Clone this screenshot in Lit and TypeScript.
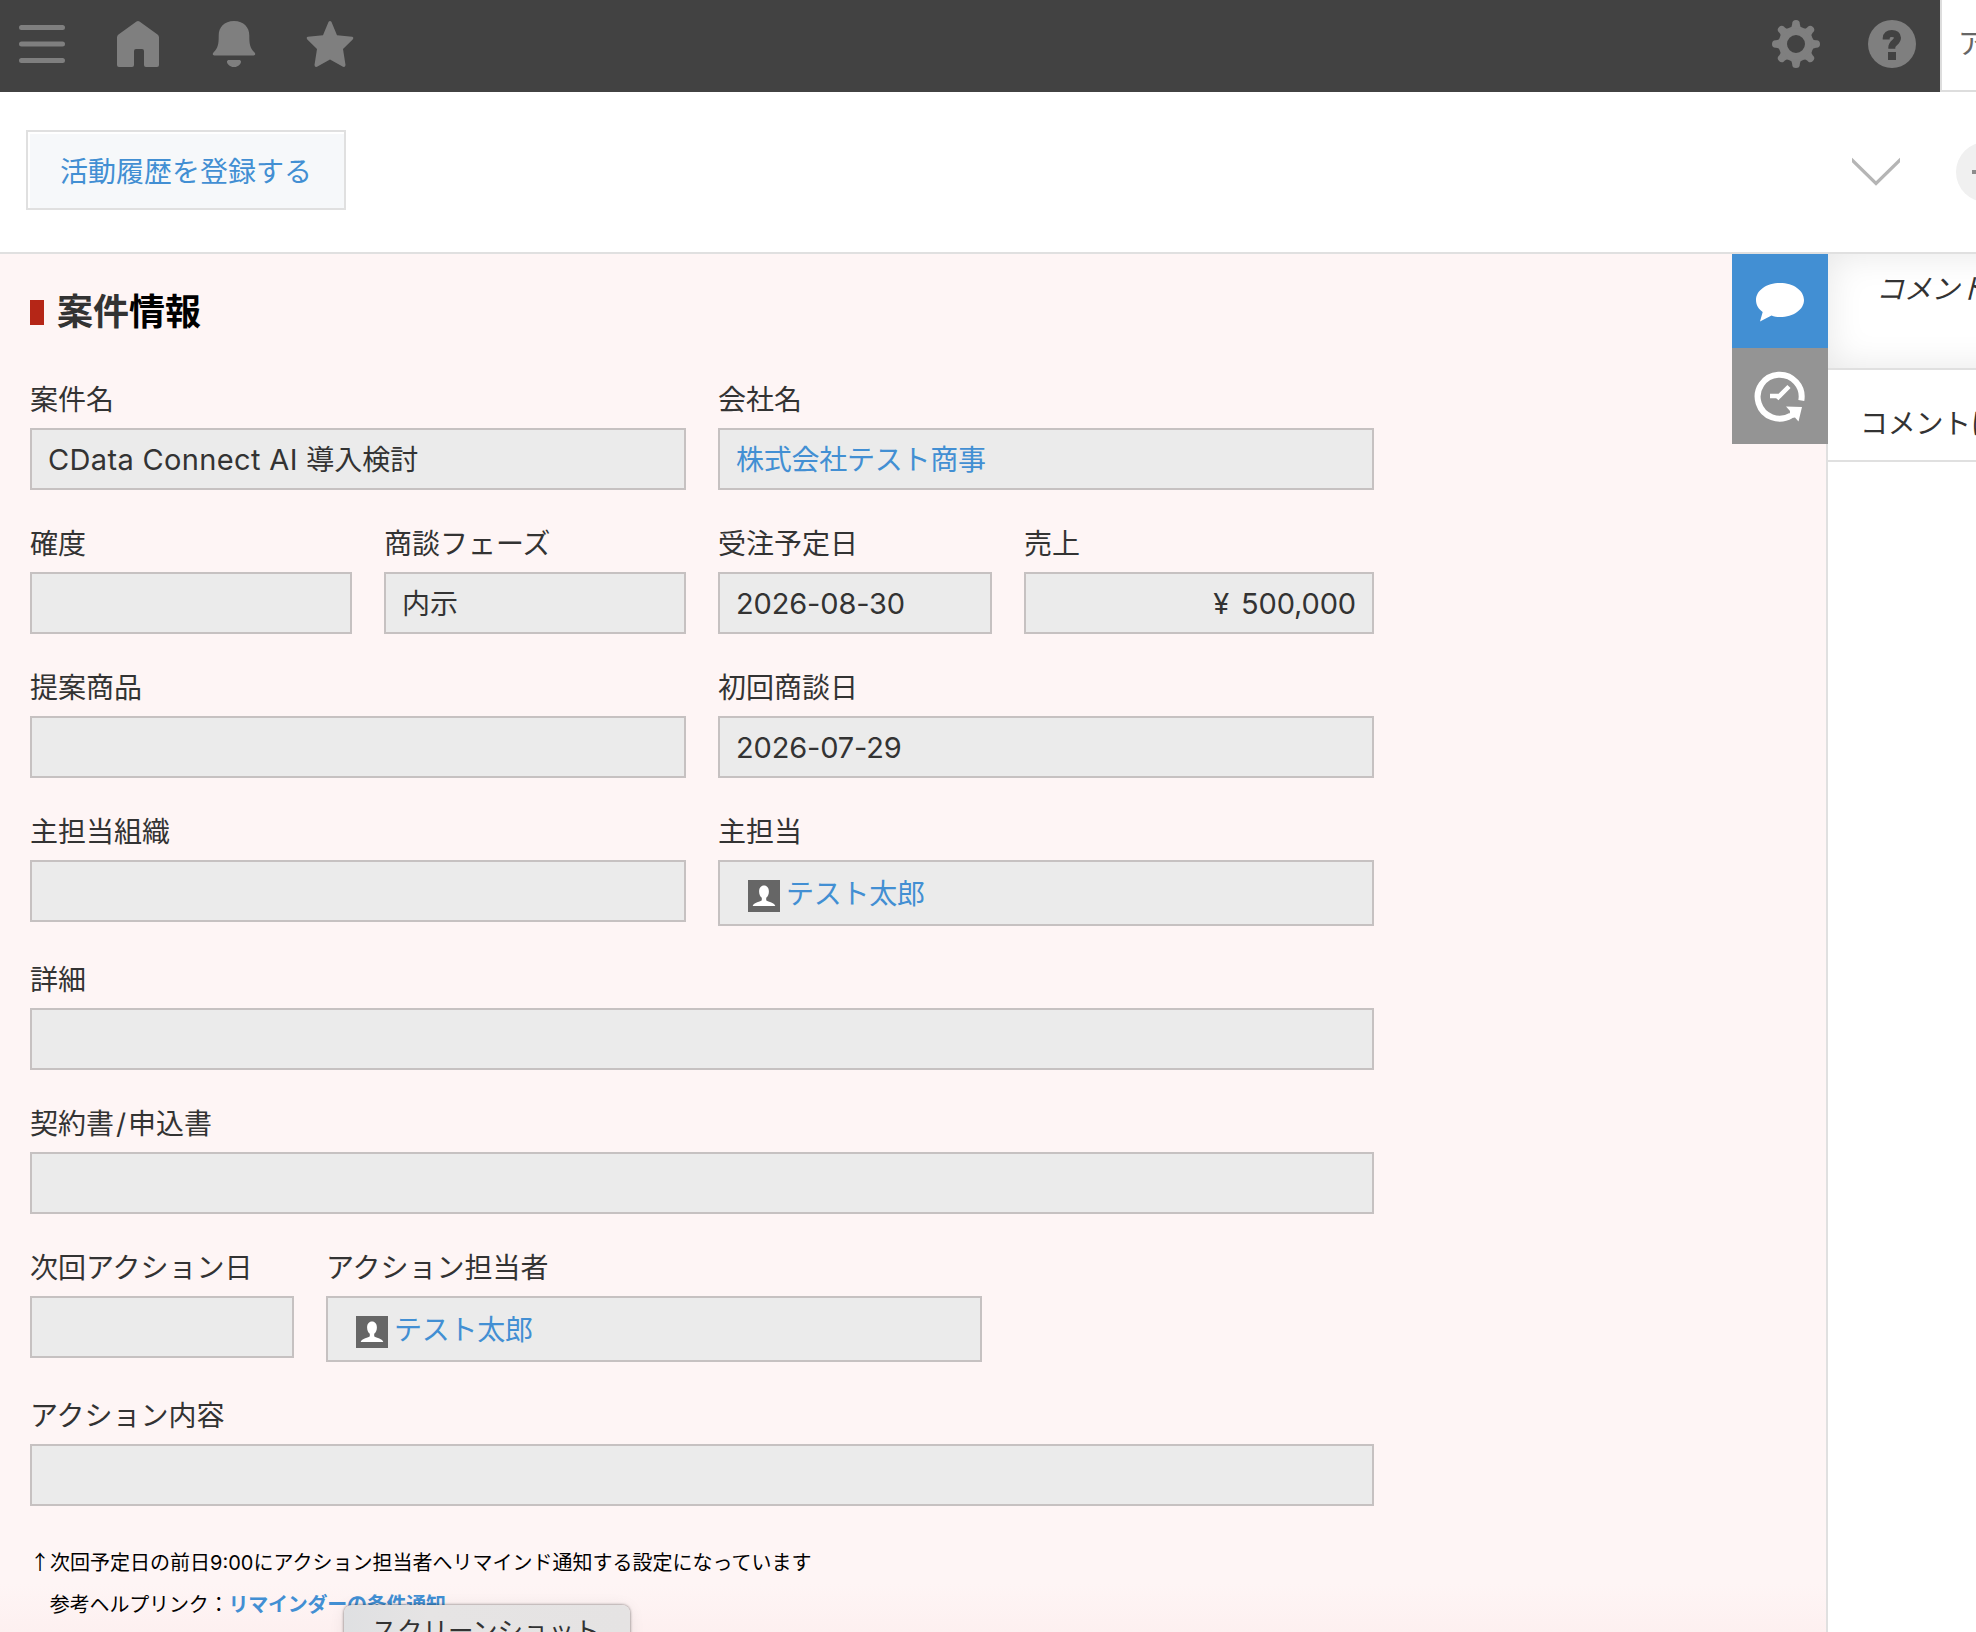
import { LitElement, html, css, svg, nothing } from "lit";
import { customElement, property } from "lit/decorators.js";
import { classMap } from "lit/directives/class-map.js";

interface Field {
  label: string;
  width: number;
  latin?: string;
  value?: string;
  kind?: "text" | "link" | "user" | "number";
}

const ROWS: Field[][] = [
  [
    { label: "案件名", width: 656, latin: "CData Connect AI ", value: "導入検討" },
    { label: "会社名", width: 656, value: "株式会社テスト商事", kind: "link" },
  ],
  [
    { label: "確度", width: 322 },
    { label: "商談フェーズ", width: 302, value: "内示" },
    { label: "受注予定日", width: 274, value: "2026-08-30" },
    { label: "売上", width: 350, value: "¥ 500,000", kind: "number" },
  ],
  [
    { label: "提案商品", width: 656 },
    { label: "初回商談日", width: 656, value: "2026-07-29" },
  ],
  [
    { label: "主担当組織", width: 656 },
    { label: "主担当", width: 656, value: "テスト太郎", kind: "user" },
  ],
  [{ label: "詳細", width: 1344 }],
  [{ label: "契約書/申込書", width: 1344 }],
  [
    { label: "次回アクション日", width: 264 },
    { label: "アクション担当者", width: 656, value: "テスト太郎", kind: "user" },
  ],
  [{ label: "アクション内容", width: 1344 }],
];

const GEAR_TEETH = [0, 45, 90, 135, 180, 225, 270, 315];

@customElement("record-field")
class RecordField extends LitElement {
  @property({ attribute: false }) field!: Field;

  static styles = css`
    :host { display: block; }
    .label { height: 58px; line-height: 60px; white-space: nowrap; }
    .slash { padding: 0 2px; }
    .box {
      box-sizing: border-box;
      height: 62px;
      padding: 2px 16px 0;
      border: 2px solid #c6c1c1;
      background: #ebebeb;
      display: flex;
      align-items: center;
      white-space: pre;
    }
    .latin { font-size: 29px; letter-spacing: 0.35px; }
    .digits { font-size: 29px; letter-spacing: -0.15px; }
    .link, .user { color: #428fd3; letter-spacing: -0.25px; }
    .number { justify-content: flex-end; word-spacing: 4px; }
    .user { height: 66px; padding-left: 28px; gap: 6px; }
    .avatar { width: 32px; height: 32px; margin-top: 4px; flex: none; }
  `;

  render() {
    const { label, width, latin, value = "", kind = "text" } = this.field;
    const [head, tail] = label.split("/");
    return html`
      <div class="label">${head}${tail ? html`<span class="slash">/</span>${tail}` : nothing}</div>
      <div class=${classMap({ box: true, [kind]: true })} style="width:${width}px">
        ${kind === "user"
          ? html`<svg class="avatar" viewBox="0 0 32 32">
              <rect width="32" height="32" fill="#666" />
              <path fill="#fff" d="M16 5.500c-3 0-4.900 2.500-4.900 6 0 2.700 1.100 5 2.700 6.300v2.400c-.8 1.700-8.400 1.900-9.100 5.800h22.600c-.7-3.900-8.300-4.100-9.100-5.800v-2.400c1.600-1.300 2.700-3.600 2.700-6.300C20.900 8 19 5.500 16 5.500z" />
            </svg>`
          : nothing}
        ${latin ? html`<span class="latin">${latin}</span>` : nothing}
        <span class=${classMap({ digits: /\d/.test(value) })}>${value}</span>
      </div>
    `;
  }
}

@customElement("app-root")
class AppRoot extends LitElement {
  static styles = css`
    :host {
      display: block;
      position: relative;
      width: 1976px;
      height: 1632px;
      overflow: hidden;
      background: #fff;
      color: #333;
      font: 28px/1.5 Inter, "Noto Sans CJK JP", sans-serif;
    }
    * { box-sizing: border-box; }
    svg { display: block; flex: none; }
    .header { display: flex; height: 92px; }
    .nav {
      width: 1940px;
      background: #424242;
      color: #7f7f7f;
      display: flex;
      align-items: center;
      padding: 0 24px 4px 18px;
      gap: 48px;
    }
    .spacer { flex: 1; }
    .account {
      flex: 1;
      border-left: 2px solid #ddd;
      border-bottom: 2px solid #ddd;
      padding-left: 16px;
      line-height: 89px;
      color: #666;
      white-space: nowrap;
      overflow: hidden;
    }
    .toolbar {
      display: flex;
      height: 162px;
      border-bottom: 2px solid #e0e0e0;
      padding: 38px 0 0 26px;
    }
    .action {
      width: 320px;
      height: 80px;
      border: 2px solid #e0e0e0;
      background: #f6f8fa;
      box-shadow: inset 2px 2px 0 #fff;
      color: #428fd3;
      text-align: center;
      line-height: 81px;
    }
    .chevron { margin: 27px 56px 0 0; }
    .plus { margin: 12px -40px 0 0; }
    .body { display: flex; height: 1378px; }
    .record {
      width: 1828px;
      background: linear-gradient(#fef5f5 1330px, #fdf0f0 1378px);
      border-right: 2px solid #e0e0e0;
      display: flex;
      justify-content: space-between;
    }
    .form { padding: 31px 0 0 30px; }
    .title {
      display: flex;
      align-items: center;
      gap: 13px;
      height: 54px;
      margin-bottom: 31px;
      font-size: 36px;
      font-weight: 700;
      line-height: 54px;
    }
    .marker { width: 14px; height: 25px; background: #b52617; margin-top: 1px; }
    .strong { color: #000; }
    .row { display: flex; align-items: flex-start; gap: 32px; margin-bottom: 24px; }
    .notes { color: #000; font-size: 20px; line-height: 42px; padding-top: 12px; white-space: nowrap; }
    .arrow { display: inline-block; width: 20px; font-family: "Noto Sans CJK JP", sans-serif; line-height: 1; }
    .ref { letter-spacing: -0.15px; }
    .help { color: #428fd3; font-weight: 700; letter-spacing: -0.25px; }
    .tabs { width: 96px; margin-right: -2px; }
    .tab { display: flex; justify-content: center; align-items: center; height: 96px; background: #949494; }
    .tab.active { height: 94px; padding-top: 2px; background: #428fd3; }
    .side { flex: 1; overflow: hidden; white-space: nowrap; letter-spacing: -0.3px; }
    .composer {
      height: 116px;
      margin-right: -60px;
      border-bottom: 2px solid #e0e0e0;
      box-shadow: inset 0 0 36px rgba(0, 0, 0, 0.1);
      padding: 14px 0 0 48px;
      font-style: italic;
    }
    .empty { height: 92px; border-bottom: 2px solid #e0e0e0; padding-left: 32px; line-height: 108px; }
    .tooltip {
      position: absolute;
      left: 344px;
      top: 1605px;
      width: 286px;
      height: 54px;
      border-radius: 8px;
      background: linear-gradient(90deg, #dfe0e2, #e6e4e4 30%, #e5e3e3);
      box-shadow: 0 0 3px rgba(0, 0, 0, 0.55), 0 2px 16px rgba(0, 0, 0, 0.08);
      font-size: 25.500px;
      line-height: 52px;
      text-align: center;
      padding-right: 3px;
      white-space: nowrap;
    }
  `;

  render() {
    return html`
      <div class="header">
        <div class="nav">
          <svg width="48" height="48" viewBox="0 0 48 48" stroke="currentColor" stroke-width="5" stroke-linecap="round">
            <path d="M3.500 7.500h41M3.500 24h41M3.500 40.500h41" />
          </svg>
          <svg width="48" height="48" viewBox="0 0 48 48" fill="currentColor">
            <path d="M22.500 1.500q1.500-1 3 0L43.500 14.500Q45 15.600 45 17.500V45q0 2-2 2H32q-2 0-2-2V31q0-2-2-2h-6q-2 0-2 2v14q0 2-2 2H5q-2 0-2-2V17.500q0-1.900 1.500-3z" />
          </svg>
          <svg width="48" height="48" viewBox="0 0 48 48" fill="currentColor">
            <path d="M24 1C14 1 8.700 7.500 8.700 15.500c0 8.500-.5 12-5.200 17C2 34.200 3 35.600 5 35.600h38c2 0 3-1.400 1.500-3.100-4.700-5-5.200-8.500-5.200-17C39.300 7.500 34 1 24 1zM19 40h10c2.500 0 2.500 2.500 1 4.200-1.600 1.900-3.500 2.800-6 2.800s-4.400-.9-6-2.800c-1.500-1.700-1.500-4.200 1-4.200z" />
          </svg>
          <svg width="48" height="48" viewBox="0 0 48 48" fill="currentColor">
            <path d="M22.600 1.800q1.400-1.800 2.800 0L31 15.200l15.200 1.600q2 .9.500 2.600L37 29l2.500 16q-.2 2.500-2.500 1.800L24 39.500 11 46.800q-2.300.7-2.500-1.800L11 29 1.300 19.400q-1.500-1.700.5-2.600L17 15.200z" />
          </svg>
          <div class="spacer"></div>
          <svg width="48" height="48" viewBox="0 0 48 48" fill="currentColor">
            <path fill-rule="evenodd" d="M24 6.500a17.500 17.500 0 1 0 0 35a17.500 17.500 0 1 0 0-35zM24 15a9 9 0 1 1 0 18a9 9 0 1 1 0-18z" />
            ${GEAR_TEETH.map((a) => svg`<path transform="rotate(${a} 24 24)" d="M17.500 8.500Q20.200 7 20.200 4V3.500Q20.200 0 24 0T27.800 3.500V4Q27.800 7 30.500 8.500z" />`)}
          </svg>
          <svg width="48" height="48" viewBox="0 0 48 48">
            <circle cx="24" cy="24" r="24" fill="currentColor" />
            <path d="M18.200 19.600v-1.400c0-3.200 2.200-4.800 5.600-4.800 3.500 0 5.700 1.600 5.700 4.400 0 4.800-5.700 4.600-5.700 9.800v1.100" fill="none" stroke="#424242" stroke-width="7" />
            <path d="M20 32h8v8h-8z" fill="#424242" />
          </svg>
        </div>
        <div class="account">ア</div>
      </div>
      <div class="toolbar">
        <div class="action">活動履歴を登録する</div>
        <div class="spacer"></div>
        <svg class="chevron" width="48" height="30" viewBox="0 0 48 30" fill="none" stroke="#b5b5b5" stroke-width="3.200">
          <path d="M-1 2L24 26.500 49 2" />
        </svg>
        <svg class="plus" width="60" height="60" viewBox="0 0 60 60">
          <circle cx="30" cy="30" r="30" fill="#f0f0f0" />
          <path d="M16 30h28M30 16v28" stroke="#8c8c8c" stroke-width="4" />
        </svg>
      </div>
      <div class="body">
        <div class="record">
          <div class="form">
            <div class="title"><i class="marker"></i><span>案件<span class="strong">情報</span></span></div>
            ${ROWS.map((row) => html`<div class="row">${row.map((f) => html`<record-field .field=${f}></record-field>`)}</div>`)}
            <div class="notes">
              <div><span class="arrow">↑</span>次回予定日の前日9:00にアクション担当者へリマインド通知する設定になっています</div>
              <div class="ref">　参考ヘルプリンク：<span class="help">リマインダーの条件通知</span></div>
            </div>
          </div>
          <div class="tabs">
            <div class="tab active">
              <svg width="50" height="40" viewBox="0 0 50 40" fill="#fff">
                <path d="M25 1C11.500 1 1 8.500 1 18c0 5 2.500 9 6.700 12L5 39.500 16.500 33.500C19 34.500 22 35 25 35c13.500 0 24-7.500 24-17S38.500 1 25 1z" />
              </svg>
            </div>
            <div class="tab">
              <svg width="52" height="52" viewBox="0 0 52 52" fill="none" stroke="#fff">
                <path d="M47.300 30.500A22 22 0 1 0 37 45.500" stroke-width="6" />
                <path d="M16 26h9.500l9.500-9.500M23 26l3 2.500" stroke-width="4.500" />
                <path d="M32 36.500L48 37 44.500 51.500 41 47.500 35.500 48.500 36 41z" fill="#fff" stroke="none" />
              </svg>
            </div>
          </div>
        </div>
        <div class="side">
          <div class="composer">コメント</div>
          <div class="empty">コメントは</div>
        </div>
      </div>
      <div class="tooltip">スクリーンショット</div>
    `;
  }
}
